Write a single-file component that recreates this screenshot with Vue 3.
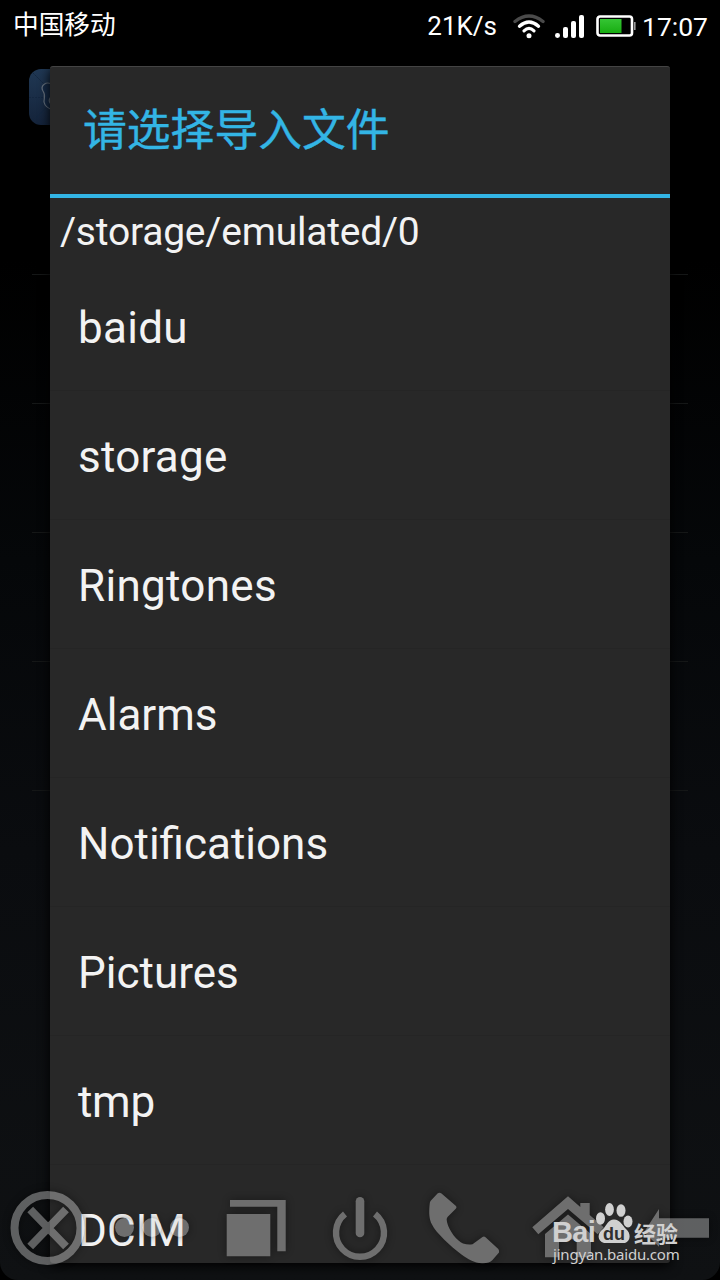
<script setup>
const files = [
  { name: 'baidu', spacing: 0.3 },
  { name: 'storage', spacing: 0.25 },
  { name: 'Ringtones', spacing: 0.3 },
  { name: 'Alarms', spacing: 0 },
  { name: 'Notifications', spacing: 0 },
  { name: 'Pictures', spacing: 0 },
  { name: 'tmp', spacing: -0.3 },
  { name: 'DCIM', spacing: 0 },
]
</script>

<template>
  <div class="phone">
    <div class="backdrop">
      <svg class="app-icon" viewBox="0 0 56 56">
        <defs>
          <linearGradient id="tile" x1="0" y1="0" x2="0" y2="1">
            <stop offset="0" stop-color="#203854" />
            <stop offset="1" stop-color="#14233a" />
          </linearGradient>
        </defs>
        <rect width="56" height="56" rx="12" fill="url(#tile)" />
        <path d="M4 4L22 22M0 28.500H14M5 51L18 38" stroke="#142740" stroke-width="1" stroke-dasharray="2 1" fill="none" />
        <path d="M24 16C17 11 11 17 14 22C17 26 15 29 15 33C16 38 20 40 25 41M24 27C19 29 19 34 24 36" fill="#152a46" stroke="#65707d" stroke-width="1.200" />
      </svg>
      <div class="lines"><i v-for="n in 5" :key="n"></i></div>
    </div>

    <header class="status">
      <span class="carrier">中国移动</span>
      <div class="status-right">
        <span class="speed">21K/s</span>
        <svg class="wifi" width="32" height="25" viewBox="0 0 32 25">
          <g fill="none" stroke-linecap="round">
            <path d="M2 7.500Q16 -3.500 30 7.500" stroke="#4a4a4a" stroke-width="3.400" />
            <path d="M6.500 12.200Q16 4 25.500 12.200" stroke="#fff" stroke-width="3.400" />
            <path d="M11 16.800Q16 12 21 16.800" stroke="#fff" stroke-width="3.200" />
          </g>
          <circle cx="16" cy="21.700" r="2.500" fill="#fff" />
        </svg>
        <svg class="signal" width="30" height="24" viewBox="0 0 30 24" fill="#fff">
          <rect x="0" y="18" width="5" height="5" rx="2.400" />
          <rect x="8" y="12" width="5" height="11" rx="2" />
          <rect x="16" y="6" width="5" height="17" rx="2" />
          <rect x="24" y="0" width="5" height="23" rx="2" />
        </svg>
        <svg class="battery" width="41" height="22" viewBox="0 0 41 22">
          <defs>
            <linearGradient id="charge" x1="0" y1="0" x2="0" y2="1">
              <stop offset="0" stop-color="#35c534" />
              <stop offset="1" stop-color="#18ad12" />
            </linearGradient>
          </defs>
          <rect x="1.500" y="1.500" width="34.500" height="19" rx="2.500" fill="#000" stroke="#fff" stroke-width="2.600" />
          <rect x="4" y="4" width="21.500" height="14" fill="url(#charge)" />
          <path d="M38.800 7V15" stroke="#999" stroke-width="1.600" />
        </svg>
        <span class="clock">17:07</span>
      </div>
    </header>

    <main class="dialog">
      <h1>请选择导入文件</h1>
      <p class="path">/storage/emulated/0</p>
      <ul>
        <li v-for="f in files" :key="f.name">
          <span :style="{ letterSpacing: f.spacing + 'px' }">{{ f.name }}</span>
        </li>
      </ul>
    </main>

    <nav class="float-bar">
      <svg viewBox="0 0 104 110">
        <g fill="none" stroke="#d7d7d7" stroke-width="8">
          <circle cx="51.500" cy="58" r="33" />
          <path d="M34.200 39.500L70 76.500M70 39.500L34.200 76.500" />
        </g>
      </svg>
      <svg viewBox="0 0 104 110" fill="#d7d7d7">
        <circle cx="24.500" cy="57.500" r="9.500" /><circle cx="52" cy="57.500" r="9.500" /><circle cx="79.500" cy="57.500" r="9.500" />
      </svg>
      <svg viewBox="0 0 104 110" fill="#d7d7d7">
        <path d="M22.700 44H66.300V86.300H22.700ZM26 30H81.700V81.300H73.300V36.700H26Z" />
      </svg>
      <svg viewBox="0 0 104 110">
        <path d="M37 44A24 24 0 1 0 67 44" fill="none" stroke="#d7d7d7" stroke-width="6.400" />
        <rect x="47.700" y="27" width="8.600" height="40.300" rx="4.300" fill="#d7d7d7" />
      </svg>
      <svg viewBox="0 0 104 110" fill="#d7d7d7">
        <path d="M25.500 23.500Q27.500 22 29.500 23.500L44 36Q45 37.300 44 38.500L35.500 47Q34 48.500 35 52C37 61 45 71 51 73.500Q56 75 60.500 74.200L70.500 67Q72 66 73.500 67.200L86.300 79Q87.500 80.500 87 82.500L80.500 90Q77 93.500 70 93.200C62 93 56 89 49.500 84.500C39 76.500 24 63 20 54.500C17 49 17 43 17.500 36Q17.700 32 18.500 31Z" />
      </svg>
      <svg viewBox="0 0 104 110" fill="#d7d7d7">
        <path d="M52 26.300L64.300 37V33H73.700V45L87.700 57.300L81.700 64.300L52 39L22.300 64.300L16.300 57.300Z" />
        <path d="M52 44.500L75 64V87.300H60.700V69.300H43V87.300H29V64Z" />
      </svg>
      <svg viewBox="0 0 104 110" fill="#d7d7d7">
        <path d="M24 62.300L39 39V48.300H89V67.700H39V76.700Z" />
      </svg>
    </nav>

    <div class="watermark">
      <div class="brand">
        <span class="bai">Bai</span>
        <svg width="38" height="42" viewBox="0 0 38 42">
          <g fill="#d0d0d0">
            <ellipse cx="5.500" cy="16.500" rx="4.500" ry="6.200" />
            <ellipse cx="14.500" cy="7.500" rx="4.400" ry="6.400" />
            <ellipse cx="26" cy="8.500" rx="4.500" ry="6.300" />
            <ellipse cx="33" cy="19.500" rx="4.500" ry="6" />
            <path d="M19 17.500C25 17.500 27 23 31 27C36 31 36 39 30 41H9C2 39 2 31 8 27C12 23 13 17.500 19 17.500Z" />
          </g>
          <text x="19" y="38" text-anchor="middle" class="du">du</text>
        </svg>
        <span class="jy">经验</span>
      </div>
      <div class="site">jingyan.baidu.com</div>
    </div>
  </div>
</template>

<style>
body { background: #000; }
</style>

<style scoped>
.phone {
  position: relative;
  width: 720px;
  height: 1280px;
  overflow: hidden;
  background: #000;
  font-family: Roboto, "Noto Sans CJK SC", sans-serif;
  color: #f3f3f3;
}
.backdrop {
  position: absolute;
  inset: 0;
  border-radius: 0 0 18px 18px;
  background: linear-gradient(#000 0, #000 260px, #050709 560px, #0a0c0f 850px, #0f1113 1280px);
}
.app-icon { display: block; width: 56px; height: 56px; margin: 69px 0 0 29px; }
.lines { margin: 21px 32px 0; }
.lines i { display: block; height: 128px; border-bottom: 1px solid #151717; }
.status {
  position: relative;
  display: flex;
  justify-content: space-between;
  height: 50px;
  color: #fff;
}
.carrier { margin-left: 13px; font-size: 25.700px; line-height: 50px; }
.status-right { display: flex; align-items: flex-start; padding-right: 12px; }
.speed { font-size: 26px; line-height: 53px; margin-right: 16px; }
.wifi { margin: 14px 10px 0 0; }
.signal { margin: 15px 11px 0 0; }
.battery { margin: 15px 5px 0 0; }
.clock { font-size: 26.500px; line-height: 53px; }
.dialog {
  position: relative;
  box-sizing: border-box;
  width: 620px;
  height: 1197px;
  margin: 16px 50px 0;
  overflow: hidden;
  background: #282828;
  border-top: 1px solid #444;
  border-radius: 3px;
  box-shadow: 0 3px 12px #000;
}
h1 {
  box-sizing: border-box;
  height: 131px;
  margin: 0;
  padding-left: 33px;
  border-bottom: 4px solid #33b5e5;
  color: #33b5e5;
  font-size: 43.800px;
  font-weight: 400;
  line-height: 129px;
  -webkit-text-stroke: .4px #33b5e5;
}
.path { height: 64px; margin: 0 0 0 10px; font-size: 39px; line-height: 69px; letter-spacing: -.22px; }
ul { margin: 0; padding: 0; list-style: none; }
li {
  box-sizing: border-box;
  height: 129px;
  padding-left: 28px;
  border-bottom: 1px solid #252525;
  font-size: 44px;
  line-height: 132px;
}
.float-bar {
  position: absolute;
  left: -4px;
  bottom: 0;
  display: flex;
  opacity: .4;
}
.float-bar svg { width: 104px; height: 110px; filter: drop-shadow(0 0 4px #000); }
.watermark { position: absolute; left: 552px; top: 1202px; color: #d0d0d0; }
.brand { display: flex; align-items: flex-end; height: 42px; }
.bai { width: 43px; font: bold 29px/24px "Liberation Sans", sans-serif; letter-spacing: -.7px; }
.brand svg { flex: none; }
.du { font: bold 18px "Liberation Sans", sans-serif; fill: #303030; }
.jy { margin-left: 1px; font: bold 22px/24px "Noto Sans CJK SC", sans-serif; }
.site { margin-left: 1px; font: 15px/20px "Noto Sans", sans-serif; letter-spacing: -.2px; white-space: nowrap; }
</style>
